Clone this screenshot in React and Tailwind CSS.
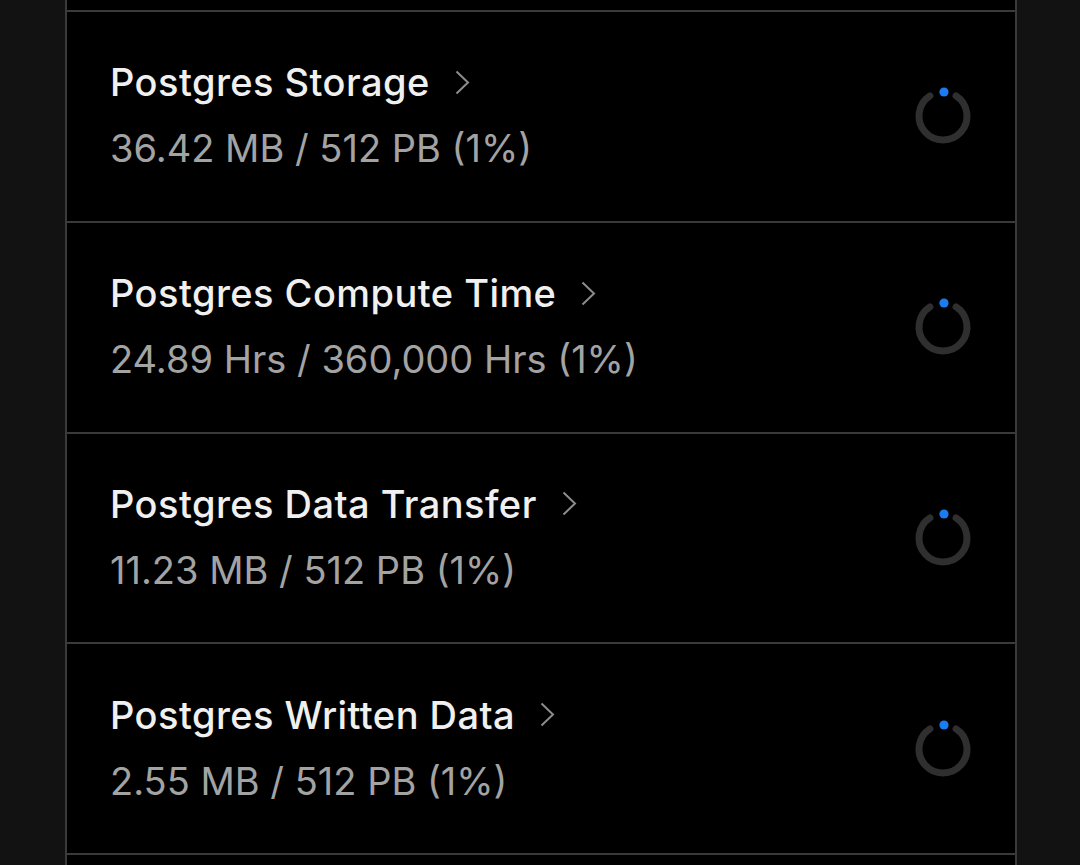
import React from 'react';

const rows = [
  { title: 'Postgres Storage', usage: '36.42 MB / 512 PB (1%)' },
  { title: 'Postgres Compute Time', usage: '24.89 Hrs / 360,000 Hrs (1%)' },
  { title: 'Postgres Data Transfer', usage: '11.23 MB / 512 PB (1%)' },
  { title: 'Postgres Written Data', usage: '2.55 MB / 512 PB (1%)' },
];

const Chevron = () => (
  <svg width="15" height="25" viewBox="0 0 15 25" className="ml-[25px] shrink-0">
    <polyline points="1.5,1.5 13,12.5 1.5,23.5" fill="none" stroke="#8c8c8c" strokeWidth="2" />
  </svg>
);

const UsageRing = () => (
  <svg width="60" height="60" viewBox="0 0 60 60" className="shrink-0">
    <path
      d="M 43.07 9.87 A 24 24 0 1 1 16.93 9.87"
      fill="none"
      stroke="#2f2f2f"
      strokeWidth="7"
      strokeLinecap="round"
    />
    <circle cx="31" cy="6" r="4.6" fill="#1b7cf2" />
  </svg>
);

const UsageRow = ({ title, usage }) => (
  <div className="h-[210.75px] border-t-2 border-[#3a3a3a] flex items-center justify-between pl-[43px] pr-[42px]">
    <div className="flex flex-col pb-[2px]">
      <div className="flex items-center h-[46px]">
        <span className="text-[38px] leading-[46px] font-medium text-[#f0f0f0] tracking-[0.45px]">{title}</span>
        <Chevron />
      </div>
      <div className="mt-[20px] text-[38px] leading-[46px] text-[#a3a3a3]">{usage}</div>
    </div>
    <UsageRing />
  </div>
);

export default function App() {
  return (
    <div
      className="w-[1080px] h-[865px] bg-[#121212] overflow-hidden"
      style={{ fontFamily: 'Inter, "Noto Sans", sans-serif' }}
    >
      <div className="ml-[65px] w-[952px] h-full bg-black border-x-2 border-[#3a3a3a] flex flex-col">
        <div className="h-[10px] shrink-0" />
        {rows.map((r) => (
          <UsageRow key={r.title} {...r} />
        ))}
        <div className="flex-1 border-t-2 border-[#3a3a3a]" />
      </div>
    </div>
  );
}
